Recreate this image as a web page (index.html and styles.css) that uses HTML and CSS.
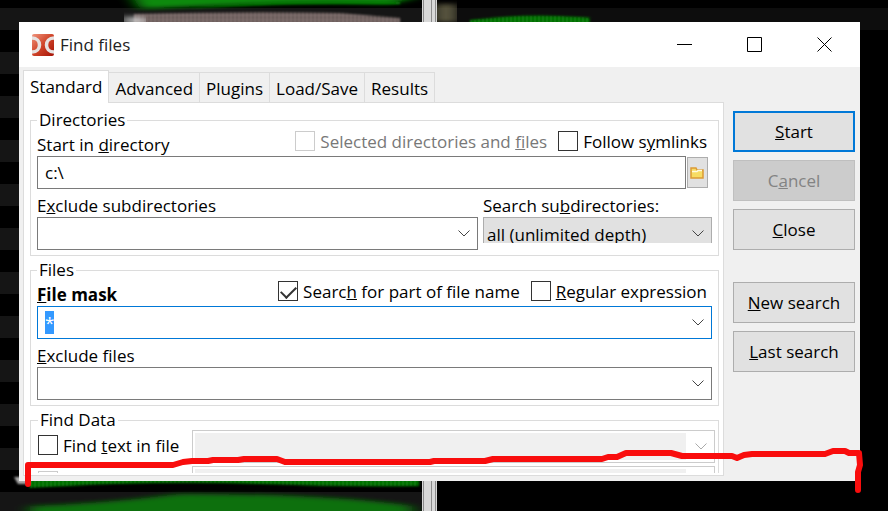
FILE: index.html
```html
<!DOCTYPE html>
<html lang="en">
<head>
  <meta charset="UTF-8">
  <title>Find files</title>
  <link rel="stylesheet" href="styles.css">
</head>
<body>
  <svg class="backdrop" viewBox="0 0 888 511" preserveAspectRatio="none" aria-hidden="true">
    <defs>
      <pattern id="stripes" y="8" width="44" height="44" patternUnits="userSpaceOnUse">
        <rect width="44" height="22" fill="#151515"/>
      </pattern>
      <pattern id="weave" width="4" height="4" patternUnits="userSpaceOnUse">
        <rect width="4" height="4" fill="#857573"/>
        <rect width="2" height="3" fill="#4d4241"/>
      </pattern>
      <pattern id="greenWeave" width="4" height="3" patternUnits="userSpaceOnUse">
        <rect width="4" height="3" fill="#0a8a0a"/>
        <rect width="2" height="2" fill="#032803"/>
      </pattern>
      <filter id="soft" x="-10%" y="-100%" width="120%" height="300%"><feGaussianBlur stdDeviation="1 1"/></filter>
      <filter id="smear" x="-10%" y="-100%" width="120%" height="300%"><feGaussianBlur stdDeviation="8 2"/></filter>
    </defs>
    <rect width="888" height="511" fill="#000"/>
    <rect width="422" height="511" fill="url(#stripes)"/>
    <rect x="437" y="8" width="451" height="22" fill="#0d0d0d"/>
    <path d="M130 -6H414V-2L390 4Q330 2 270 4T140 9Z" fill="#078a07" filter="url(#smear)"/>
    <path d="M190 8Q260 0 400 2V4Q280 2 190 8Z" fill="#078a07" filter="url(#soft)"/>
    <path d="M134 14Q250 11 340 13L400 18V24H134Z" fill="url(#weave)" filter="url(#soft)"/>
    <path d="M126 15L144 19V24H126Z" fill="#ddd" filter="url(#smear)"/>
    <rect x="437" y="4" width="18" height="18" fill="#6b664c" filter="url(#smear)"/>
    <path d="M470 20Q520 14 560 16T590 18V24H470Z" fill="url(#greenWeave)" filter="url(#soft)"/>
    <path d="M28 479H419V486Q340 487 260 484Q160 480 30 488Z" fill="url(#greenWeave)" filter="url(#soft)"/>
    <path d="M30 506Q100 504 180 494Q330 494 412 506V516H30Z" fill="#0d700d" filter="url(#smear)"/>
    <path d="M14 477H30V484H18Z" fill="#aaa" filter="url(#soft)"/>
    <path d="M422 0h15v22h-15zM422 481h15v30h-15z" fill="#d8d8d8"/>
    <path d="M423.500 0v22M431.500 0v22M435.500 0v22M423.500 481v30M431.500 481v30M435.500 481v30" stroke="#8c8c8c"/>
  </svg>

  <main class="window">
    <header class="titlebar">
      <svg class="app-icon" viewBox="0 0 24 24" aria-hidden="true">
        <defs>
          <linearGradient id="red" x2="1" y2="1">
            <stop offset="0" stop-color="#ef947c"/>
            <stop offset="0.5" stop-color="#cf4429"/>
            <stop offset="1" stop-color="#a51206"/>
          </linearGradient>
        </defs>
        <rect x="1" y="1" width="22" height="22" rx="2" fill="url(#red)"/>
        <path d="M1 5C11 5 11 19 1 19M23 5C13 5 13 19 23 19" fill="none" stroke="#e6e2e1" stroke-width="3.500"/>
      </svg>
      <h1>Find files</h1>
      <div class="window-controls">
        <button type="button" aria-label="Minimize"><svg viewBox="0 0 16 16"><path d="M0 7.500h15"/></svg></button>
        <button type="button" aria-label="Maximize"><svg viewBox="0 0 16 16"><path d="M.5.5h14v14H.5z"/></svg></button>
        <button type="button" aria-label="Close window"><svg viewBox="0 0 16 16"><path d="M.5.5l14 14M14.500.5l-14 14"/></svg></button>
      </div>
    </header>

    <form class="content">
      <div class="options">
        <nav class="tabs">
          <button type="button" class="tab active">Standard</button>
          <button type="button" class="tab">Advanced</button>
          <button type="button" class="tab">Plugins</button>
          <button type="button" class="tab">Load/Save</button>
          <button type="button" class="tab">Results</button>
        </nav>

        <div class="pane">
          <fieldset>
            <legend>Directories</legend>
            <div class="label-row">
              <label for="startDir">Start in <u>d</u>irectory</label>
              <div class="checks">
                <label class="check disabled"><input type="checkbox" disabled><span>Selected directories and <u>f</u>iles</span></label>
                <label class="check"><input type="checkbox"><span>Follow s<u>y</u>mlinks</span></label>
              </div>
            </div>
            <div class="path-row">
              <input type="text" class="field" id="startDir" value="c:\">
              <button type="button" class="browse" aria-label="Browse">
                <svg viewBox="0 0 14 12"><path d="M1 11V1h5l1 2h6v8z" fill="#f7dc63" stroke="#dc9a35" stroke-width="1.500"/><path d="M2 4.500h5l1-1h4" fill="none" stroke="#fffbe0" stroke-width="1.500"/></svg>
              </button>
            </div>
            <div class="split">
              <div>
                <div class="label-row low"><label for="excludeDirs">E<u>x</u>clude subdirectories</label></div>
                <div class="combo">
                  <input type="text" id="excludeDirs">
                  <svg class="chevron" viewBox="0 0 12 7"><path d="M.5.5L6 6L11.500.5"/></svg>
                </div>
              </div>
              <div>
                <div class="label-row low"><label for="depth">Search su<u>b</u>directories:</label></div>
                <div class="combo depth">
                  <select id="depth"><option>all (unlimited depth)</option></select>
                  <svg class="chevron" viewBox="0 0 12 7"><path d="M.5.5L6 6L11.500.5"/></svg>
                </div>
              </div>
            </div>
          </fieldset>

          <fieldset>
            <legend>Files</legend>
            <div class="label-row">
              <label for="fileMask" class="strong"><u>F</u>ile mask</label>
              <div class="checks">
                <label class="check"><input type="checkbox" checked><span>Searc<u>h</u> for part of file name</span></label>
                <label class="check"><input type="checkbox"><span><u>R</u>egular expression</span></label>
              </div>
            </div>
            <div class="combo focused">
              <input type="text" id="fileMask" value="*">
              <svg class="chevron" viewBox="0 0 12 7"><path d="M.5.5L6 6L11.500.5"/></svg>
            </div>
            <div class="label-row low"><label for="excludeFiles"><u>E</u>xclude files</label></div>
            <div class="combo">
              <input type="text" id="excludeFiles">
              <svg class="chevron" viewBox="0 0 12 7"><path d="M.5.5L6 6L11.500.5"/></svg>
            </div>
          </fieldset>

          <fieldset class="find-data">
            <legend>Find Data</legend>
            <div class="find-grid">
              <label class="check"><input type="checkbox"><span>Find <u>t</u>ext in file</span></label>
              <div class="combo off">
                <input type="text" aria-label="Text to find" disabled>
                <svg class="chevron" viewBox="0 0 12 7"><path d="M.5.5L6 6L11.500.5"/></svg>
              </div>
              <label class="check disabled"><input type="checkbox" aria-label="Replace" disabled></label>
              <div class="combo off">
                <input type="text" aria-label="Replacement" disabled>
              </div>
            </div>
          </fieldset>
        </div>
      </div>

      <div class="actions">
        <button type="submit" class="default"><u>S</u>tart</button>
        <button type="button" disabled>C<u>a</u>ncel</button>
        <button type="button"><u>C</u>lose</button>
        <button type="button" class="spaced"><u>N</u>ew search</button>
        <button type="button"><u>L</u>ast search</button>
      </div>
    </form>
  </main>

  <svg class="marker" viewBox="0 0 888 511" preserveAspectRatio="none" aria-hidden="true">
    <path d="M28 484V465H173L183 462L192 461H208L213 460H238L244 459H277L285 462H430L434 461H485L493 459L602 459L608 457H617L626 453H671L682 456H732L737 458L744 455L752 454H825L833 451H845L849 453H859L860 465L858 472V490"/>
  </svg>

  <script src="script.js"></script>
</body>
</html>
```
FILE: styles.css
```css
* {
  box-sizing: border-box;
}
body {
  margin: 0;
  min-height: 100vh;
  padding: 22px 28px 30px 19px;
  display: flex;
  background: #000;
  color: #000;
  font: 17px/20px "Open Sans", "Segoe UI", sans-serif;
  overflow: hidden;
}
button, input, select {
  font: inherit;
  color: inherit;
  margin: 0;
}
.backdrop, .marker {
  position: absolute;
  top: 0;
  left: 0;
  width: 100%;
  height: 100%;
  pointer-events: none;
}
.marker path {
  fill: none;
  stroke: #f90d0d;
  stroke-width: 6;
  stroke-linecap: round;
  stroke-linejoin: round;
}
.window {
  position: relative;
  flex: 1;
  display: flex;
  flex-direction: column;
  height: calc(100vh - 52px);
  background: #f0f0f0;
}
.titlebar {
  display: flex;
  align-items: center;
  height: 45px;
  padding-left: 12px;
  background: #fff;
}
.titlebar h1 {
  flex: 1;
  margin: 0 0 0 5px;
  font-size: 17px;
  font-weight: normal;
  color: #222;
}
.app-icon {
  width: 24px;
  height: 24px;
}
.window-controls {
  display: flex;
}
.window-controls button {
  width: 70px;
  height: 45px;
  padding: 0;
  border: 0;
  background: none;
}
.window-controls svg {
  display: block;
  width: 16px;
  height: 16px;
  margin: auto;
  fill: none;
  stroke: #000;
}
.content {
  flex: 1;
  min-height: 0;
  display: grid;
  grid-template-columns: 1fr 122px;
  grid-template-rows: minmax(0, 1fr);
  gap: 9px;
  padding: 3px 5px 5px 4px;
}
.options {
  display: flex;
  flex-direction: column;
  min-width: 0;
  min-height: 0;
}
.tabs {
  display: flex;
  align-items: flex-end;
}
.tab {
  height: 30px;
  padding: 2px 6px 0;
  border: 1px solid #dcdcdc;
  border-width: 1px 1px 0 0;
  background: #f0f0f0;
}
.tab.active {
  position: relative;
  height: 33px;
  margin-bottom: -1px;
  padding: 0 6px;
  border-left-width: 1px;
  background: #fff;
}
.pane {
  flex: 1;
  min-height: 0;
  display: flex;
  flex-direction: column;
  gap: 4px;
  padding: 7px 4px 2px 6px;
  border: 1px solid #dcdcdc;
  background: #fff;
}
fieldset {
  min-width: 0;
  margin: 0;
  padding: 0 6px 5px;
  border: 1px solid #dcdcdc;
}
legend {
  height: 20px;
  padding: 0 2px;
}
.label-row {
  display: flex;
  justify-content: space-between;
  align-items: flex-end;
  height: 26px;
  padding-bottom: 1px;
}
.label-row.low {
  height: 28px;
}
.strong {
  font-weight: bold;
}
.checks {
  display: flex;
  gap: 11px;
  margin-right: 5px;
  padding-bottom: 4px;
}
.check {
  display: flex;
  gap: 5px;
  height: 20px;
}
.check span {
  line-height: 22px;
}
.check.disabled {
  color: #787878;
}
.check input {
  appearance: none;
  width: 20px;
  height: 20px;
  border: 1px solid #333;
  background: #fff;
}
.check input:disabled {
  border-color: #ccc;
}
.check input:checked::before {
  content: "";
  display: block;
  width: 13px;
  height: 7px;
  margin: 4px 2px;
  border: solid #333;
  border-width: 0 0 2px 2px;
  transform: rotate(-45deg);
}
.path-row {
  display: flex;
  gap: 1px;
  padding-right: 4px;
}
.field, .combo {
  height: 33px;
  border: 1px solid #7a7a7a;
  background: #fff;
}
.field {
  flex: 1;
  min-width: 0;
  padding: 0 7px;
}
.browse {
  width: 21px;
  height: 31px;
  margin-top: 1px;
  padding: 0 2px;
  border: 1px solid #adadad;
  background: #e1e1e1;
}
.browse svg {
  display: block;
  width: 14px;
  height: 12px;
}
.split {
  display: grid;
  grid-template-columns: 1fr 229px;
  gap: 5px;
}
.combo {
  display: flex;
  align-items: center;
  padding-right: 7px;
}
.combo input, .combo select {
  flex: 1;
  min-width: 0;
  height: 25px;
  padding: 0 7px;
  border: 0;
  outline: 0;
  background: none;
}
.chevron {
  flex: none;
  width: 12px;
  height: 7px;
  fill: none;
  stroke: #444;
}
.combo.focused {
  border-color: #0078d7;
}
.combo.focused input::selection {
  background: #3399ff;
  color: #fff;
}
.combo.depth {
  height: 26px;
  border-color: #adadad;
  border-bottom: 0;
  background: #e1e1e1;
  overflow: hidden;
}
.combo.depth select {
  appearance: none;
  height: 32px;
  padding: 8px 3px 0;
}
.depth .chevron {
  margin-top: 5px;
}
.find-data {
  flex: 1;
  min-height: 0;
  padding: 0 3px 0 7px;
  border-bottom: 0;
}
.find-grid {
  display: grid;
  grid-template-columns: 154px 1fr;
  row-gap: 3px;
  max-height: 43px;
  overflow: hidden;
}
.find-grid .check {
  margin-top: 5px;
}
.combo.off {
  border-color: #ccc;
}
.combo.off input {
  height: 27px;
  margin: 0 9px 0 2px;
  background: #f0f0f0;
}
.combo.off input:only-child {
  margin-right: 21px;
}
.combo.off .chevron {
  stroke: #aaa;
}
.actions {
  display: flex;
  flex-direction: column;
  gap: 8px;
  padding-top: 41px;
}
.actions button {
  height: 41px;
  padding: 0;
  border: 1px solid #adadad;
  background: #e1e1e1;
}
.actions .default {
  border: 2px solid #0078d7;
}
.actions button:disabled {
  border-color: #bfbfbf;
  background: #ccc;
  color: #838383;
}
.actions .spaced {
  margin-top: 24px;
}
```
FILE: script.js
```js
const fileMask = document.getElementById("fileMask");
fileMask.focus();
fileMask.select();
```
